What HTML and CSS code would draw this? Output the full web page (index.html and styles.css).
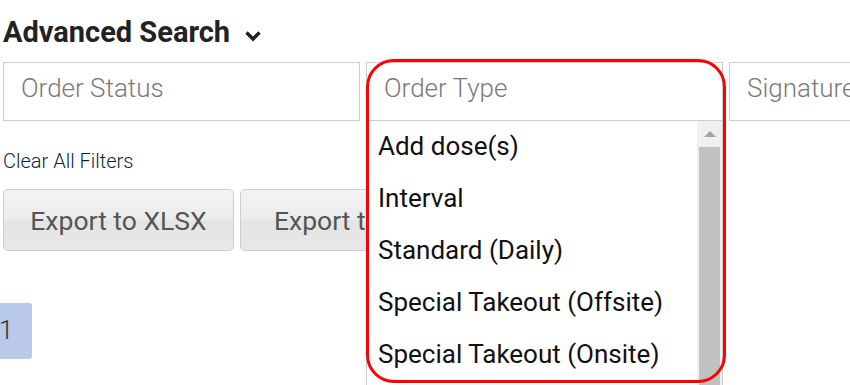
FILE: index.html
```html
<!DOCTYPE html>
<html>
<head>
    <title>Advanced Search</title>
    <link rel="stylesheet" href="styles.css">
</head>
<body>
    <h2 class="search-title">Advanced Search
        <svg class="chevron" width="18" height="12" viewBox="0 0 18 12">
            <path d="M2.5 2.5 L9 9 L15.5 2.5" fill="none" stroke="#222" stroke-width="3.4"/>
        </svg>
    </h2>

    <div class="filters">
        <div class="filter">
            <div class="filter-box">Order Status</div>
        </div>
        <div class="filter open">
            <div class="filter-box">Order Type</div>
            <div class="dropdown">
                <ul class="options">
                    <li>Add dose(s)</li>
                    <li>Interval</li>
                    <li>Standard (Daily)</li>
                    <li>Special Takeout (Offsite)</li>
                    <li>Special Takeout (Onsite)</li>
                </ul>
                <div class="scrollbar">
                    <div class="scroll-arrow"></div>
                    <div class="scroll-thumb"></div>
                </div>
            </div>
            <div class="highlight"></div>
        </div>
        <div class="filter">
            <div class="filter-box">Signature</div>
        </div>
    </div>

    <a class="clear-link" href="#">Clear All Filters</a>

    <div class="buttons">
        <button class="btn">Export to XLSX</button>
        <button class="btn">Export to CSV</button>
    </div>

    <div class="pager">
        <span class="page active">1</span>
    </div>
</body>
</html>
```

FILE: styles.css
```css
body {
    font-family: Roboto, "Liberation Sans", sans-serif;
    background-color: #fff;
    margin: 0;
    padding: 0 0 0 3px;
    overflow: hidden;
    width: 850px;
    height: 385px;
}

.search-title {
    margin: 16px 0 0 0;
    height: 46px;
    font-size: 29px;
    font-weight: bold;
    color: #222;
    display: flex;
    gap: 14px;
    line-height: 32px;
    align-items: flex-start;
}

.chevron {
    margin-top: 14px;
}

.filters {
    display: flex;
    gap: 6px;
    width: 1100px;
    height: 59px;
}

.filter {
    position: relative;
    width: 357px;
    flex: none;
}

.filter-box {
    box-sizing: border-box;
    height: 59px;
    border: 1px solid #ccc;
    padding: 10px 17px;
    font-size: 26px;
    font-weight: 300;
    color: #7a7a7a;
    background: #fff;
}

.dropdown {
    position: absolute;
    top: 58px;
    left: 0;
    width: 357px;
    height: 300px;
    box-sizing: border-box;
    border: 1px solid #ccc;
    background: #fff;
    display: flex;
    z-index: 2;
}

.options {
    list-style: none;
    margin: 0;
    padding: 5px 0 0 11px;
    flex: 1;
}

.options li {
    height: 52px;
    line-height: 40px;
    font-size: 26px;
    color: #111;
}

.scrollbar {
    width: 25px;
    background: #f0f0f0;
    display: flex;
    flex-direction: column;
    align-items: center;
}

.scroll-arrow {
    margin-top: 10px;
    width: 0;
    height: 0;
    border-left: 6px solid transparent;
    border-right: 6px solid transparent;
    border-bottom: 6px solid #a3a3a3;
}

.scroll-thumb {
    margin-top: 10px;
    width: 21px;
    flex: 1;
    background: #c1c1c1;
}

.highlight {
    position: absolute;
    top: -3px;
    left: 0;
    width: 360px;
    height: 324px;
    box-sizing: border-box;
    border: 3.5px solid #f00;
    border-radius: 28px;
    z-index: 3;
}

.clear-link {
    display: block;
    margin-top: 28px;
    font-size: 20px;
    font-weight: 300;
    color: #0f1f45;
    text-decoration: none;
    line-height: 24px;
}

.buttons {
    display: flex;
    gap: 6px;
    margin-top: 16px;
}

.btn {
    width: 231px;
    height: 62px;
    font-family: Roboto, "Liberation Sans", sans-serif;
    font-size: 26.5px;
    color: #555;
    border: 1px solid #ccc;
    border-radius: 5px;
    background: linear-gradient(#f3f3f3 0%, #ececec 48%, #e4e4e4 52%, #e8e8e8 100%);
    flex: none;
}

.pager {
    margin: 52px 0 0 -40px;
}

.page {
    display: inline-block;
    width: 69px;
    height: 56px;
    box-sizing: border-box;
    padding: 12px 0 0 36px;
    font-size: 26px;
    font-weight: 300;
    color: #333;
    background: #b9c9e9;
    border-radius: 3px;
}
```
